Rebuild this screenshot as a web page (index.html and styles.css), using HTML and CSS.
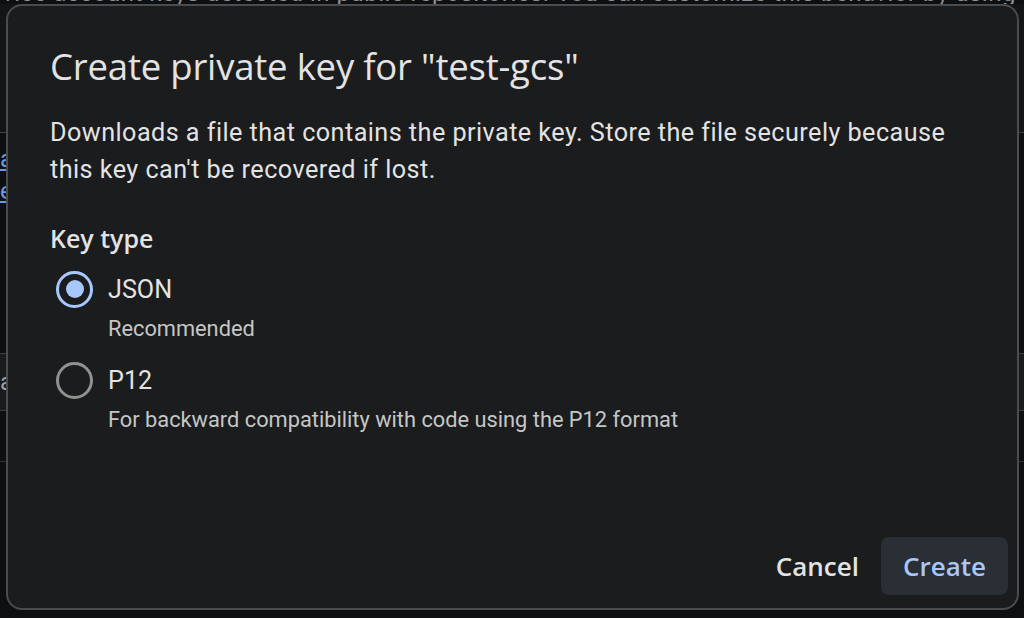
FILE: index.html
```html
<!DOCTYPE html>
<html>
<head>
<meta charset="utf-8">
<link rel="stylesheet" href="styles.css">
</head>
<body>
<div class="page">
  <div class="bg-top">vice account keys detected in public repositories. You can customize this behavior by using</div>
  <div class="bg-rows">
    <div class="bg-row bg-row-a"></div>
    <div class="bg-row bg-link">a<br>e</div>
    <div class="bg-row bg-row-b"></div>
    <div class="bg-row bg-grey">a</div>
    <div class="bg-row bg-row-c"></div>
  </div>
</div>
<div class="dialog" role="dialog">
  <h1 class="title">Create private key for "test-gcs"</h1>
  <p class="desc">Downloads a file that contains the private key. Store the file securely because this key can't be recovered if lost.</p>
  <div class="label">Key type</div>
  <div class="options">
    <div class="option">
      <span class="radio checked"><span class="dot"></span></span>
      <div class="opt-text">
        <div class="opt-name">JSON</div>
        <div class="opt-hint">Recommended</div>
      </div>
    </div>
    <div class="option">
      <span class="radio"></span>
      <div class="opt-text">
        <div class="opt-name">P12</div>
        <div class="opt-hint">For backward compatibility with code using the P12 format</div>
      </div>
    </div>
  </div>
  <div class="actions">
    <button class="btn btn-text">Cancel</button>
    <button class="btn btn-tonal">Create</button>
  </div>
</div>
</body>
</html>
```
FILE: styles.css
```css
html, body {
  margin: 0;
  padding: 0;
  width: 1024px;
  height: 618px;
  overflow: hidden;
  background: #0e0f10;
  font-family: Roboto, "Liberation Sans", sans-serif;
}
.page {
  position: relative;
  width: 1024px;
  height: 618px;
}
.bg-top {
  margin-top: -18px;
  padding-left: 2px;
  font-size: 24px;
  line-height: 22px;
  color: #8d9094;
  white-space: nowrap;
  letter-spacing: 0.5px;
}
.bg-rows {
  display: flex;
  flex-direction: column;
}
.bg-row-a {
  height: 128px;
  border-bottom: 1px solid #3c4043;
  background: #141516;
}
.bg-link {
  height: 80px;
  color: #6f9be0;
  font-size: 24px;
  line-height: 32px;
  padding-top: 10px;
  text-decoration: underline;
}
.bg-row-b {
  height: 130px;
  border-bottom: 1px solid #3c4043;
}
.bg-grey {
  height: 56px;
  color: #9aa0a6;
  font-size: 24px;
  line-height: 56px;
  background: #1a1b1c;
  border-bottom: 1px solid #3c4043;
}
.bg-row-c {
  height: 50px;
  border-bottom: 1px solid #2f3133;
}
.dialog {
  position: absolute;
  left: 6px;
  top: 4px;
  width: 1013px;
  height: 606px;
  box-sizing: border-box;
  background: #1b1c1e;
  border: 2px solid #4a4c4f;
  border-radius: 16px;
  padding: 36px 0 0 42px;
  display: flex;
  flex-direction: column;
  color: #e3e3e3;
}
.title {
  margin: 0;
  font-family: "Open Sans", Roboto, sans-serif;
  font-weight: 400;
  font-size: 36.5px;
  line-height: 48px;
  color: #e3e3e3;
  letter-spacing: -0.2px;
}
.desc {
  margin: 23.5px 0 0 0;
  width: 930px;
  font-size: 25.2px;
  line-height: 37px;
  color: #e3e3e3;
  letter-spacing: 0.45px;
}
.label {
  margin-top: 34.5px;
  font-size: 25px;
  font-weight: 600;
  line-height: 32px;
  color: #e3e3e3;
  font-family: "Open Sans", Roboto, sans-serif;
}
.options {
  display: flex;
  flex-direction: column;
  gap: 18.5px;
  margin-top: 16.5px;
}
.option {
  display: flex;
  align-items: flex-start;
  gap: 15px;
}
.radio {
  flex: none;
  box-sizing: border-box;
  width: 37px;
  height: 37px;
  margin-left: 6px;
  border-radius: 50%;
  border: 3.6px solid #8e918f;
  display: flex;
  align-items: center;
  justify-content: center;
}
.radio.checked {
  border-color: #a8c7fa;
}
.dot {
  width: 18px;
  height: 18px;
  border-radius: 50%;
  background: #a8c7fa;
}
.opt-text {
  display: flex;
  flex-direction: column;
}
.opt-name {
  font-size: 25.2px;
  line-height: 37px;
  color: #e3e3e3;
}
.opt-hint {
  margin-top: 7.5px;
  font-size: 21.8px;
  line-height: 28px;
  color: #c4c7c5;
}
.actions {
  margin-top: auto;
  display: flex;
  justify-content: flex-end;
  align-items: center;
  gap: 0;
  padding: 0 9px 13px 0;
}
.btn {
  border: none;
  font-family: "Open Sans", Roboto, sans-serif;
  font-size: 26px;
  font-weight: 600;
  height: 58px;
  padding: 0 22px;
  border-radius: 8px;
  background: transparent;
  cursor: pointer;
}
.btn-text {
  color: #e3e3e3;
}
.btn-tonal {
  background: #2a2e35;
  color: #a8c7fa;
}
```
